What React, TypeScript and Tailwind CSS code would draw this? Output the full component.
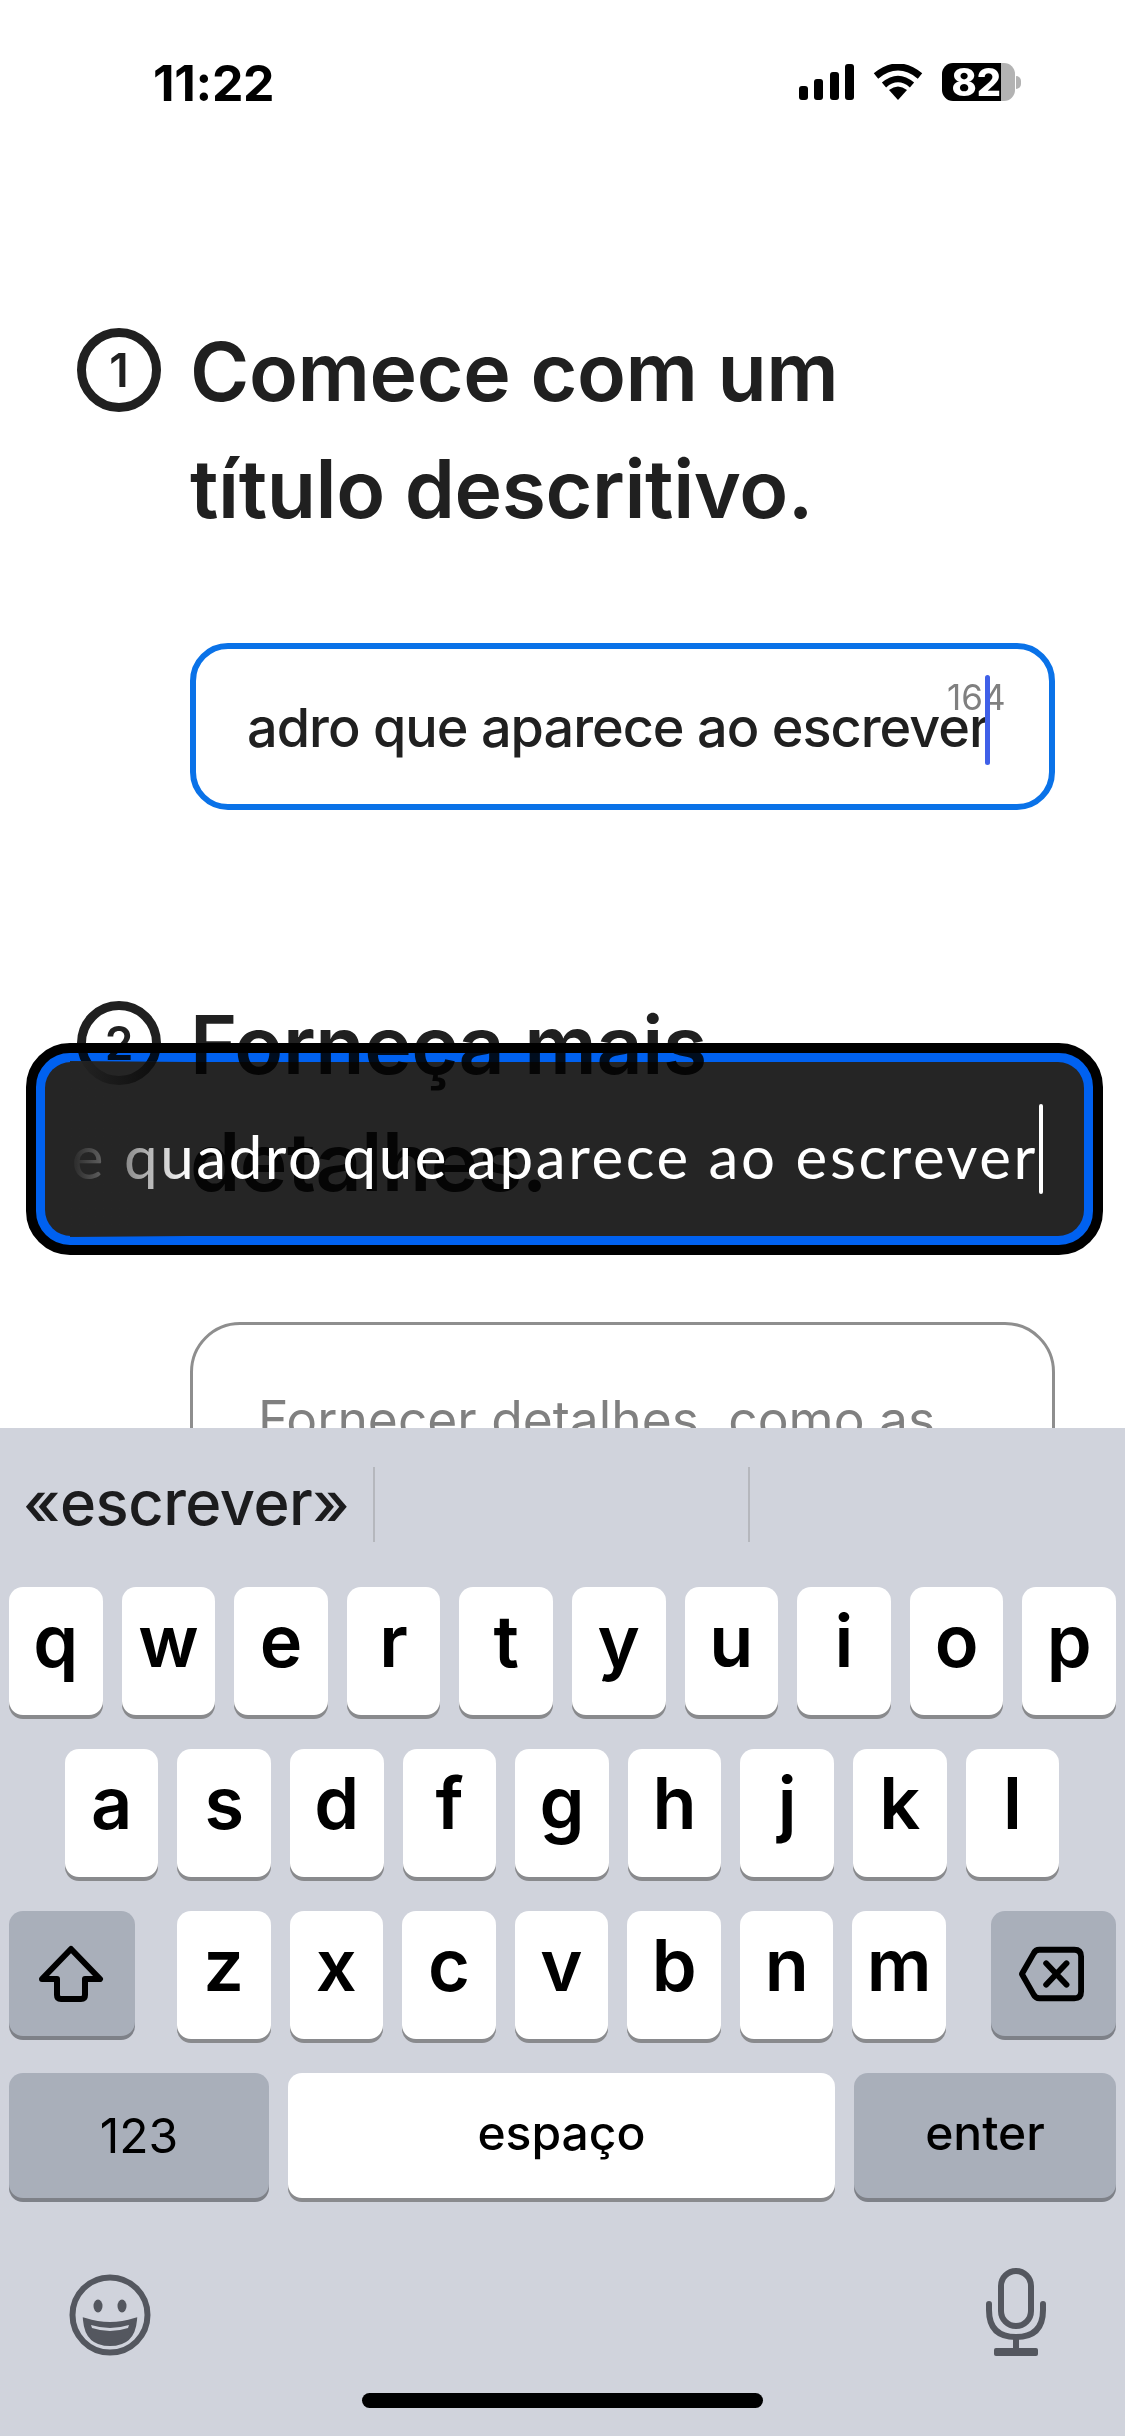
import React from "react";

const rows = ["qwertyuiop".split(""), "asdfghjkl".split(""), "zxcvbnm".split("")];

function Key({ label }: { label: string }) {
  return (
    <div className="w-[93.6px] h-[128px] bg-white rounded-[14px] shadow-[0_4px_0_#898a8d] flex items-center justify-center text-[72px] font-semibold text-black leading-none pb-[16px] border-b-4 border-transparent">
      {label}
    </div>
  );
}

function Step({ n, lines }: { n: string; lines: string[] }) {
  return (
    <div className="flex items-start pl-[77px] gap-[29px]">
      <div className="w-[84px] h-[84px] mt-[17px] shrink-0 rounded-full border-[9px] border-[#202020] flex items-center justify-center text-[46px] font-semibold text-[#202020] leading-none">
        {n}
      </div>
      <div className="text-[80.5px] leading-[116.5px] pt-[3px] font-semibold text-[#202020] tracking-[-0.4px]">
        {lines.map((l) => (
          <div key={l}>{l}</div>
        ))}
      </div>
    </div>
  );
}

export default function App() {
  return (
    <div className="relative w-[1125px] h-[2436px] bg-white overflow-hidden flex flex-col font-['Inter',sans-serif]">
      {/* Status bar */}
      <div className="h-[130px] shrink-0 flex justify-between items-start pt-[56px] pl-[153px] pr-[104px]">
        <div className="text-[50px] leading-[54px] font-bold text-black tracking-[-0.3px]">11:22</div>
        <div className="flex items-center gap-[19px] pt-[7px]">
          <svg width="55" height="36" viewBox="0 0 55 36">
            <rect x="0" y="22" width="9" height="14" rx="3" fill="#000" />
            <rect x="15" y="15" width="9" height="21" rx="3" fill="#000" />
            <rect x="31" y="8" width="9" height="28" rx="3" fill="#000" />
            <rect x="46" y="0" width="9" height="36" rx="3" fill="#000" />
          </svg>
          <svg width="50" height="36" viewBox="0 0 50 36">
            <path d="M25 36 L16 26 Q25 19 34 26 Z" fill="#000" />
            <path d="M11 21 Q25 9 39 21" stroke="#000" strokeWidth="6.5" fill="none" />
            <path d="M3 12 Q25 -6 47 12" stroke="#000" strokeWidth="7" fill="none" />
          </svg>
          <div className="flex items-center">
            <div className="w-[73px] h-[38px] rounded-[11px] overflow-hidden flex">
              <div className="w-[59px] bg-black text-white text-[38px] font-extrabold leading-[38px] text-right">82</div>
              <div className="flex-1 bg-[#b3b3b3]" />
            </div>
            <div className="w-[5px] h-[13px] ml-[1px] bg-[#b3b3b3] rounded-r-full" />
          </div>
        </div>
      </div>

      {/* Page */}
      <div className="h-[1298px] shrink-0 overflow-hidden pt-[181px]">
        <Step n="1" lines={["Comece com um", "título descritivo."]} />
        <div className="relative ml-[190px] mt-[96px] w-[865px] h-[167px] rounded-[38px] border-[6px] border-[#0a72e8] flex items-center pl-[51px]">
          <span className="text-[54px] font-medium text-[#202020] whitespace-nowrap tracking-[-1px] pt-[2px]">adro que aparece ao escrever</span>
          <span className="absolute left-[751px] top-[28px] text-[35px] leading-[40px] text-[#808080]">164</span>
          <span className="absolute left-[789px] top-[26px] w-[5px] h-[90px] rounded-full bg-[#3f60e8]" />
        </div>
        <div className="mt-[174px]">
          <Step n="2" lines={["Forneça mais", "detalhes."]} />
        </div>
        <div className="ml-[190px] mt-[102px] w-[865px] h-[300px] rounded-[50px] border-[3px] border-[#8e8e8e] pl-[65px] pt-[62px] text-[51.5px] leading-[64px] text-[#808080] whitespace-nowrap">
          Fornecer detalhes, como as
        </div>
      </div>

      {/* Floating field */}
      <div className="absolute left-[26px] top-[1043px] w-[1077px] h-[212px] rounded-[44px] border-[10px] border-black mix-blend-multiply bg-[#0061f0]">
        <div className="m-[9px] h-[174px] rounded-[26px] bg-[#252525]" />
      </div>
      <div className="absolute left-[70px] top-[1061px] w-[968px] h-[176px] overflow-hidden flex items-center justify-end">
        <span className="font-['Lato',sans-serif] text-[60px] text-white whitespace-nowrap tracking-[2.6px] pt-[14px]">
          ve quadro que aparece ao escrever
        </span>
        <div className="absolute left-0 top-0 w-[120px] h-full bg-linear-to-r from-[#252525]/95 from-[5%] to-transparent" />
      </div>
      <div className="absolute left-[1039px] top-[1104px] w-[4px] h-[90px] rounded-full bg-white" />

      {/* Keyboard */}
      <div className="flex-1 bg-[#d0d3dc] flex flex-col px-[9px]">
        <div className="h-[159px] flex items-start pt-[39px] -mx-[9px]">
          <div className="w-[373px] h-[75px] pl-[23px] text-[61.5px] font-medium leading-[72px] text-[#1c1c1e] tracking-[-0.5px] whitespace-nowrap">«escrever»</div>
          <div className="w-[2px] h-[75px] bg-[#b5b7bd]" />
          <div className="w-[373px] h-[75px]" />
          <div className="w-[2px] h-[75px] bg-[#b5b7bd]" />
        </div>
        <div className="flex flex-col gap-[34px]">
          <div className="flex justify-between">
            {rows[0].map((k) => (
              <Key key={k} label={k} />
            ))}
          </div>
          <div className="flex justify-center gap-[19px] pr-[1px]">
            {rows[1].map((k) => (
              <Key key={k} label={k} />
            ))}
          </div>
          <div className="flex justify-between">
            <div className="w-[126px] h-[125px] bg-[#a9afba] rounded-[14px] shadow-[0_4px_0_#7e8188] flex items-center justify-center pr-[3px]">
              <svg width="66" height="58" viewBox="0 0 66 58" fill="none">
                <path d="M33 4 L62 34 H47 V50 Q47 54 43 54 H23 Q19 54 19 50 V34 H4 Z" stroke="#000" strokeWidth="6" strokeLinejoin="round" />
              </svg>
            </div>
            <div className="flex gap-[19px] mr-[3px]">
              {rows[2].map((k) => (
                <Key key={k} label={k} />
              ))}
            </div>
            <div className="w-[125px] h-[125px] bg-[#a9afba] rounded-[14px] shadow-[0_4px_0_#7e8188] flex items-center justify-center pr-[6px]">
              <svg width="66" height="58" viewBox="0 0 68 58" fill="none">
                <path d="M22 4 H58 Q65 4 65 11 V47 Q65 54 58 54 H22 Q18 54 16 50 L4 29 L16 8 Q18 4 22 4 Z" stroke="#000" strokeWidth="6" strokeLinejoin="round" />
                <path d="M29 18 L50 40 M50 18 L29 40" stroke="#000" strokeWidth="6" strokeLinecap="round" />
              </svg>
            </div>
          </div>
          <div className="flex justify-between">
            <div className="w-[260px] h-[125px] bg-[#a9afba] rounded-[14px] shadow-[0_4px_0_#7e8188] flex items-center justify-center text-[48px] text-black">123</div>
            <div className="w-[547px] h-[125px] bg-white rounded-[14px] shadow-[0_4px_0_#898a8d] flex items-center justify-center text-[48px] font-medium text-black pb-[6px]">espaço</div>
            <div className="w-[262px] h-[125px] bg-[#a9afba] rounded-[14px] shadow-[0_4px_0_#7e8188] flex items-center justify-center text-[48px] font-medium text-black pb-[6px]">enter</div>
          </div>
        </div>
        <div className="flex justify-between items-end pl-[60px] pr-[70px] mt-[70px]">
          <svg width="82" height="82" viewBox="0 0 82 82" fill="none">
            <circle cx="41" cy="41" r="37.5" stroke="#54575f" strokeWidth="6" />
            <ellipse cx="29" cy="32" rx="4.5" ry="6.5" fill="#54575f" />
            <ellipse cx="53" cy="32" rx="4.5" ry="6.5" fill="#54575f" />
            <path d="M16 46 Q41 54 66 46 Q64 70 41 70 Q18 70 16 46 Z" stroke="#54575f" strokeWidth="4" fill="#54575f" />
            <path d="M22 51 Q41 57 60 51 L59 54 Q41 60 23 54 Z" fill="#d0d3dc" />
          </svg>
          <svg width="60" height="88" viewBox="0 0 60 88" fill="none">
            <rect x="15" y="3" width="30" height="55" rx="15" stroke="#54575f" strokeWidth="6" />
            <path d="M3 36 V42 Q3 69 30 69 Q57 69 57 42 V36" stroke="#54575f" strokeWidth="6" strokeLinecap="round" />
            <path d="M30 69 V82" stroke="#54575f" strokeWidth="6" />
            <rect x="8" y="80" width="44" height="8" rx="2" fill="#54575f" />
          </svg>
        </div>
        <div className="mt-[37px] mx-auto w-[401px] h-[15px] rounded-full bg-black" />
      </div>
    </div>
  );
}
